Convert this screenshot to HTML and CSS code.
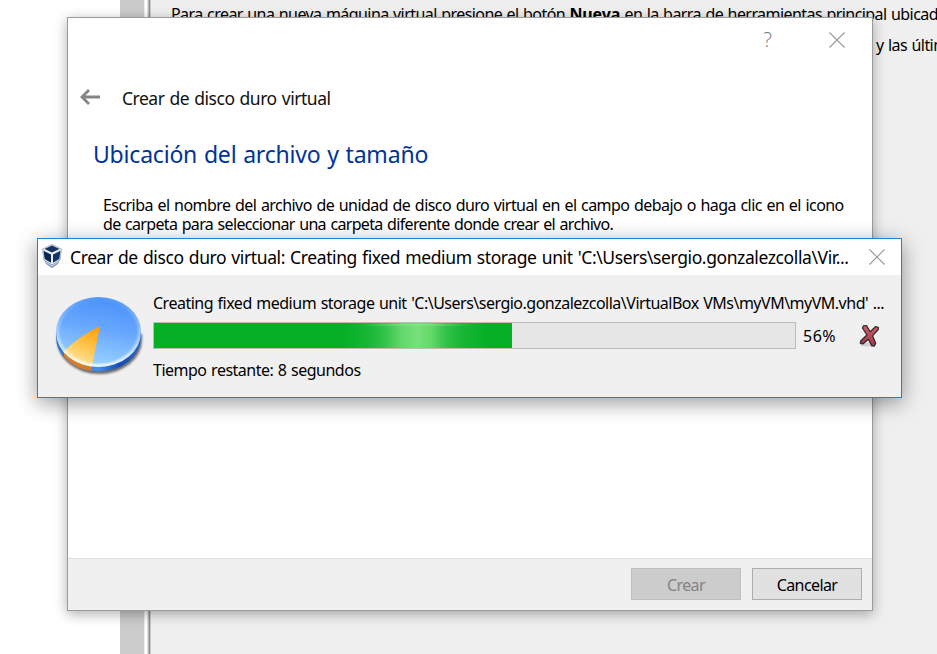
FILE: index.html
```html
<!DOCTYPE html>
<html lang="es">
<head>
<meta charset="utf-8">
<title>Crear de disco duro virtual</title>
<link rel="stylesheet" href="styles.css">
</head>
<body>
<main class="manager">
  <div class="list"></div>
  <div class="scrollbar"></div>
  <div class="splitter"></div>
  <section class="welcome">
    <p class="welcome-line">Para crear una nueva máquina virtual presione el botón <b>Nueva</b> en la barra de herramientas principal ubicada</p>
    <p class="welcome-line second">y las últimas</p>
  </section>
</main>

<section class="wizard">
  <div class="wizard-caption">
    <span class="help">?</span>
    <svg class="close" viewBox="0 0 16 16"><path d="M.5.5l15 15M15.500.5l-15 15"/></svg>
  </div>
  <header class="wizard-nav">
    <svg class="back" viewBox="0 0 20 16"><path d="M20 8H2M9 1L2 8l7 7"/></svg>
    <span class="wizard-name">Crear de disco duro virtual</span>
  </header>
  <h1 class="wizard-title">Ubicación del archivo y tamaño</h1>
  <div class="wizard-text">
    <div class="first">Escriba el nombre del archivo de unidad de disco duro virtual en el campo debajo o haga clic en el icono</div>
    <div class="rest">de carpeta para seleccionar una carpeta diferente donde crear el archivo.</div>
  </div>
  <footer class="wizard-footer">
    <button class="btn" disabled>Crear</button>
    <button class="btn">Cancelar</button>
  </footer>
</section>

<section class="progress">
  <header class="progress-caption">
    <svg class="logo" viewBox="0 0 20 24">
      <path d="M2 15l2 5 6 4 6-4 2-5z" fill="#8190b8"/>
      <path d="M4 18l6 4 6-4" stroke="#dfe5f3" fill="none"/>
      <path d="M10 .5L19.500 5 18 16l-8 5-8-5L.5 5z" fill="#e9edf5" stroke="#8998b5" stroke-width=".7"/>
      <path d="M10 1.500L17.500 5 10 8.500 2.500 5z" fill="#17365f"/>
      <path d="M1.500 6.800L9 10.500v8.300l-6.300-3.900z" fill="#082751"/>
      <path d="M18.500 6.800L11 10.500v8.300l6.300-3.900z" fill="#113766"/>
    </svg>
    <span class="progress-title">Crear de disco duro virtual: Creating fixed medium storage unit 'C:\Users\sergio.gonzalezcolla\Vir...</span>
    <svg class="close" viewBox="0 0 16 16"><path d="M.5.5l15 15M15.500.5l-15 15"/></svg>
  </header>
  <div class="progress-body">
    <svg class="pie" viewBox="0 0 90 82">
      <defs>
        <linearGradient id="top" x1=".6" y1="0" x2=".35" y2="1"><stop offset="0" stop-color="#4990fa"/><stop offset=".45" stop-color="#68a8fd"/><stop offset="1" stop-color="#9dd7ff"/></linearGradient>
        <linearGradient id="side"><stop offset="0" stop-color="#2b70d8"/><stop offset=".5" stop-color="#438ee9"/><stop offset=".75" stop-color="#174bb5"/><stop offset="1" stop-color="#2d68cd"/></linearGradient>
        <linearGradient id="slice" x1=".8" y1="0" x2=".4" y2="1"><stop offset="0" stop-color="#ffa005"/><stop offset=".5" stop-color="#ffc957"/><stop offset="1" stop-color="#fff0bd"/></linearGradient>
        <linearGradient id="rim" x1="0" y1="0" x2="0" y2="1"><stop offset="0" stop-color="#fff" stop-opacity=".05"/><stop offset=".5" stop-color="#fff" stop-opacity=".35"/><stop offset="1" stop-color="#fff" stop-opacity=".85"/></linearGradient>
        <filter id="soft" x="-20%" y="-20%" width="140%" height="140%"><feGaussianBlur stdDeviation="1.300"/></filter>
        <clipPath id="disc"><ellipse cx="43.500" cy="36" rx="42.500" ry="35"/></clipPath>
      </defs>
      <path d="M2 38v6a42.500 34 0 0 0 85 0v-6z" fill="#222" opacity=".65" filter="url(#soft)"/>
      <path d="M1 36v5a42.500 34.500 0 0 0 85 0v-5z" fill="url(#side)"/>
      <path d="M9 55v6Q20 73 36.500 75v-6z" fill="#d57b2d"/>
      <ellipse cx="43.500" cy="36" rx="42.500" ry="35" fill="url(#top)"/>
      <g clip-path="url(#disc)">
        <path d="M45 30Q24 40 7 57L12 75H36z" fill="url(#slice)"/>
        <ellipse cx="43.500" cy="36" rx="41.500" ry="34" fill="none" stroke="url(#rim)" stroke-width="4" filter="url(#soft)"/>
      </g>
    </svg>
    <div class="progress-info">
      <div class="operation">Creating fixed medium storage unit 'C:\Users\sergio.gonzalezcolla\VirtualBox VMs\myVM\myVM.vhd' ...</div>
      <div class="bar-row">
        <div class="bar"><div class="fill"></div></div>
        <span class="percent">56%</span>
        <svg class="cancel" viewBox="0 0 22 24">
          <defs><linearGradient id="red" x1="0" y1="0" x2="0" y2="1"><stop offset="0" stop-color="#cf626c"/><stop offset="1" stop-color="#9d3744"/></linearGradient></defs>
          <ellipse cx="8" cy="20.500" rx="7" ry="2" fill="#aaa" opacity=".45"/>
          <path d="M4.500 1.800L7.500 1.500l3.700 6.300 5.500-5.300 2.800 1-.3 2-5.700 6.300 3.200 7.500-1.300 2.800-2.600-.2-3.400-6.600-5.600 4.700-2.500-.8.400-2.200 6.200-6L3.500 4z" fill="url(#red)" stroke="#302528" stroke-width="1.200" stroke-linejoin="round"/>
        </svg>
      </div>
      <div class="remaining">Tiempo restante: 8 segundos</div>
    </div>
  </div>
</section>
</body>
</html>
```
FILE: styles.css
```css
* { box-sizing: border-box; }
body {
  margin: 0;
  width: 937px;
  height: 654px;
  overflow: hidden;
  position: relative;
  background: #fff;
  color: #000;
  font: 16px/20px "Noto Sans", "Open Sans", sans-serif;
  white-space: nowrap;
}
p, h1 { margin: 0; }

.manager { display: flex; height: 654px; }
.list { width: 120px; }
.scrollbar { width: 24px; background: #cbcbcb; }
.splitter {
  width: 7px;
  background: linear-gradient(90deg, #ececec 0 1px, #fff 1px 3px, #e3e3e3 3px 4px, #b5b5b5 4px 5px, #909090 5px 6px, #c8c8c8 6px);
}
.welcome { flex: 1; min-width: 0; background: #efefef; padding: 4px 0 0 20px; overflow: hidden; }
.welcome-line { height: 31px; letter-spacing: -.56px; word-spacing: .8px; }
.welcome-line b { letter-spacing: -.15px; }
.welcome-line.second { padding-left: 705px; }

.wizard {
  position: absolute;
  left: 67px;
  top: 17px;
  width: 806px;
  height: 594px;
  display: flex;
  flex-direction: column;
  background: #fff;
  border: 1px solid #9b9b9b;
  box-shadow: 0 3px 12px rgba(0, 0, 0, .32);
}
.close { display: block; width: 16px; height: 16px; fill: none; stroke: #999; stroke-width: 1.1; }
.wizard-caption { display: flex; justify-content: flex-end; align-items: center; height: 44px; padding-right: 27px; }
.help { margin-right: 57px; font-family: "Open Sans", sans-serif; font-size: 20px; font-weight: 300; color: #777; }
.wizard-nav { display: flex; align-items: center; height: 38px; margin-top: 16px; padding-left: 12px; }
.back { width: 20px; height: 16px; margin-right: 22px; fill: none; stroke: #848484; stroke-width: 2.8; }
.wizard-name { font-size: 17.5px; margin-top: 2px; color: #111; letter-spacing: -.48px; word-spacing: 1px; }
.wizard-title { margin: 23px 0 0 25px; font-size: 23px; line-height: 30px; font-weight: 400; color: #003399; letter-spacing: -.2px; word-spacing: 1px; }
.wizard-text { margin: 27px 0 0 35px; line-height: 19px; word-spacing: 1px; }
.first { letter-spacing: -.56px; }
.rest { letter-spacing: -.67px; }
.wizard-footer {
  display: flex;
  justify-content: flex-end;
  gap: 11px;
  height: 52px;
  margin-top: auto;
  padding: 9px 10px 0 0;
  border-top: 1px solid #dfdfdf;
  background: #f0f0f0;
}
.btn {
  width: 110px;
  height: 32px;
  padding: 1px 0 0;
  border: 1px solid #adadad;
  background: #e1e1e1;
  color: #000;
  font: inherit;
  letter-spacing: -.6px;
}
.btn:disabled { background: #ccc; border-color: #bfbfbf; color: #838383; }

.progress {
  position: absolute;
  left: 37px;
  top: 238px;
  width: 865px;
  height: 160px;
  border: 1px solid #1883d7;
  background: #f0f0f0;
  box-shadow: 0 5px 20px rgba(0, 0, 0, .4);
}
.progress-caption { display: flex; align-items: center; height: 36px; background: #fff; padding: 0 16px 0 4px; }
.logo { width: 20px; height: 24px; margin-right: 8px; margin-top: -2px; }
.progress-title { flex: 1; font-size: 17.5px; letter-spacing: -.4px; word-spacing: 1px; }
.progress-body { display: flex; padding: 18px 0 0 16px; }
.pie { width: 90px; height: 82px; margin: 3px 0 0 1px; }
.progress-info { margin-left: 8px; flex: 1; letter-spacing: -.5px; word-spacing: .9px; }
.operation, .remaining { height: 20px; }
.bar-row { display: flex; align-items: center; margin-top: 9px; height: 27px; }
.bar { width: 643px; height: 27px; border: 1px solid #bcbcbc; background: #e6e6e6; }
.fill {
  width: 358px;
  height: 25px;
  background:
    radial-gradient(ellipse 65px 1px at 263px 2px, #8be58d, transparent),
    linear-gradient(90deg, #06b025 190px, #18b735 215px, #35c44b 232px, #63d969 248px, #76e17a 264px, #63d969 277px, #35c44b 291px, #18b735 307px, #06b025 333px);
}
.percent { width: 57px; padding-left: 7px; letter-spacing: .5px; }
.cancel { width: 22px; height: 24px; margin-left: 6px; }
.remaining { margin-top: 11px; }
```
